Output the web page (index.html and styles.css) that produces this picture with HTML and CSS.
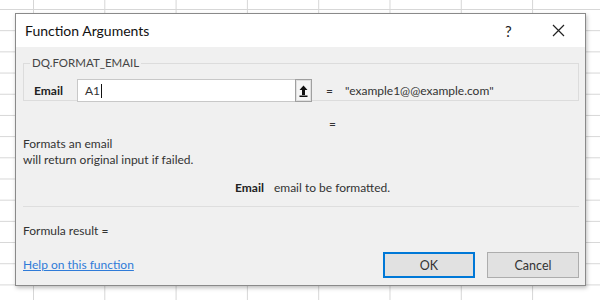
FILE: index.html
```html
<!DOCTYPE html>
<html lang="en">
<head>
	<meta charset="UTF-8">
	<title>Function Arguments</title>
	<link rel="stylesheet" href="styles.css">
</head>
<body>
	<div class="dialog">
		<div class="titlebar">
			<span class="title">Function Arguments</span>
			<span class="help-btn">?</span>
			<span class="close-btn">
				<svg width="13" height="13" viewBox="0 0 13 13"><path d="M1 1L12 12M12 1L1 12" stroke="#222" stroke-width="1.2" fill="none"/></svg>
			</span>
		</div>
		<div class="content">
			<fieldset class="group">
				<legend>DQ.FORMAT_EMAIL</legend>
				<div class="arg-row">
					<span class="arg-label">Email</span>
					<div class="arg-input">A1<span class="caret"></span></div>
					<span class="ref-btn">
						<svg width="9" height="12" viewBox="0 0 9 12"><path d="M4.5 0.5L0.5 5H3V10H6V5H8.5Z" fill="#111"/><rect x="0.5" y="10.5" width="8" height="1.5" fill="#111"/></svg>
					</span>
					<span class="eq">=</span>
					<span class="arg-value">"example1@@example.com"</span>
				</div>
			</fieldset>
			<div class="result-eq">=</div>
			<p class="desc">Formats an email<br>will return original input if failed.</p>
			<p class="arg-desc"><b>Email</b>email to be formatted.</p>
			<div class="footer">
				<div class="formula">Formula result =</div>
				<div class="bottom">
					<a href="#" class="help-link">Help on this function</a>
					<button class="btn btn-ok">OK</button>
					<button class="btn">Cancel</button>
				</div>
			</div>
		</div>
	</div>
</body>
</html>
```

FILE: styles.css
```css
body {
	margin: 0;
	width: 600px;
	height: 300px;
	overflow: hidden;
	background-color: #fff;
	background-image:
		linear-gradient(to right, #d6d6d6 1px, transparent 1px),
		linear-gradient(to bottom, #d6d6d6 1px, transparent 1px);
	background-size: 71.3px 100%, 100% 21.2px;
	background-position: 33px 0, 0 9px;
	font-family: Lato, "Noto Sans", sans-serif;
	font-size: 12px;
	line-height: 16px;
	color: #333;
}

.dialog {
	margin: 13px 0 0 15px;
	width: 569px;
	height: 271px;
	border: 1px solid #8a8a8a;
	background: #f0f0f0;
	box-shadow: 1px 2px 4px rgba(0, 0, 0, 0.25);
	display: flex;
	flex-direction: column;
}

.titlebar {
	height: 33px;
	background: #fff;
	display: flex;
	align-items: center;
	padding-left: 9px;
}

.title {
	font-size: 14px;
	color: #111;
	flex: 1;
}

.help-btn {
	font-size: 15px;
	color: #222;
	width: 20px;
	margin-right: 27px;
}

.close-btn {
	display: flex;
	margin-right: 20px;
}

.content {
	flex: 1;
	padding: 0 6px 0 7px;
	display: flex;
	flex-direction: column;
}

.group {
	margin: 8px 0 0;
	border: 1px solid #dcdcdc;
	padding: 9px 10px 5px 10px;
	height: 30px;
}

.group legend {
	padding: 0 2px;
	margin-left: -4px;
	font-size: 11.5px;
	color: #444;
}

.arg-row {
	display: flex;
	align-items: center;
	margin-top: -1px;
}

.arg-label {
	font-weight: bold;
	color: #222;
	width: 43px;
}

.arg-input {
	width: 210px;
	height: 21px;
	border: 1px solid #c8c8c8;
	border-right: none;
	background: #fff;
	padding-left: 7px;
	line-height: 21px;
	color: #333;
	display: flex;
	align-items: center;
}

.caret {
	display: inline-block;
	width: 1px;
	height: 14px;
	background: #111;
	margin-left: 1px;
}

.ref-btn {
	width: 15px;
	height: 21px;
	border: 1px solid #a0a0a0;
	background: #f5f5f5;
	display: flex;
	align-items: center;
	justify-content: center;
	box-shadow: inset 0 0 0 1px #e0e0e0;
}

.eq {
	margin-left: 14px;
	width: 19px;
}

.arg-value {
	color: #333;
}

.result-eq {
	margin: 15px 0 0 306px;
}

.desc {
	margin: 4px 0 0;
}

.arg-desc {
	margin: 12px 0 0 212px;
}

.arg-desc b {
	color: #222;
	margin-right: 10px;
}

.footer {
	margin-top: 10px;
	border-top: 1px solid #dedede;
	padding-top: 16px;
}

.bottom {
	display: flex;
	align-items: center;
	margin-top: 13px;
}

.help-link {
	color: #2f7bd8;
	flex: 1;
}

.btn {
	width: 92px;
	height: 26px;
	margin-left: 12px;
	background: #e1e1e1;
	border: 1px solid #adadad;
	font-family: inherit;
	font-size: 12.5px;
	color: #333;
}

.btn-ok {
	border: 2px solid #0078d7;
}
```
